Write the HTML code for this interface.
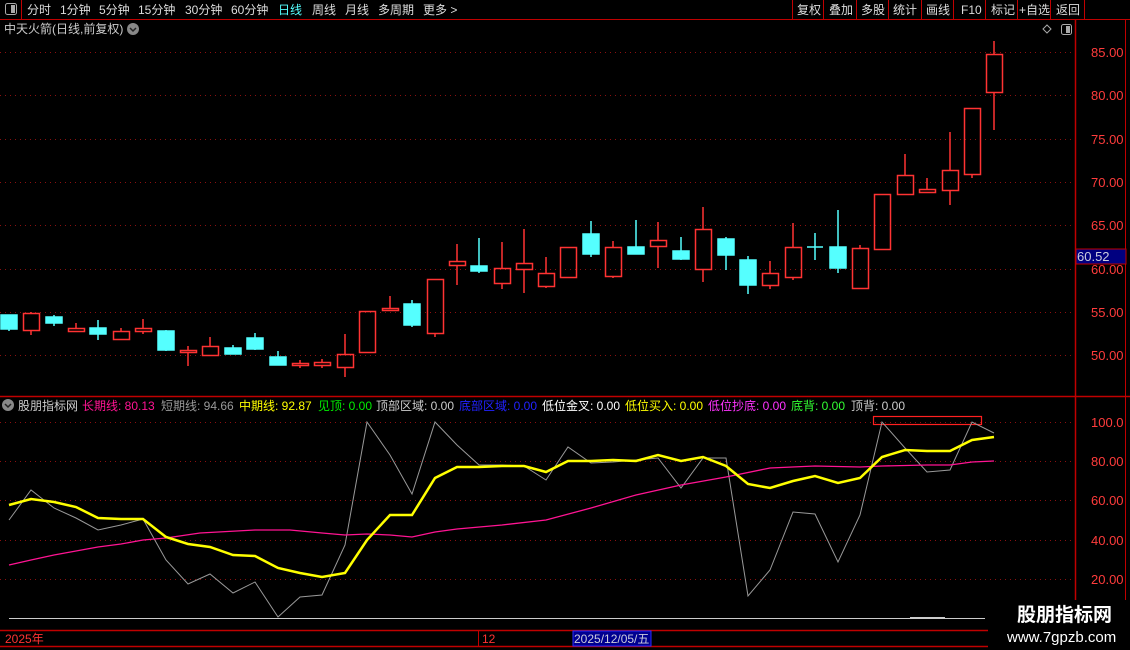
<!DOCTYPE html>
<html><head><meta charset="utf-8"><style>
html,body{margin:0;padding:0;background:#000;width:1130px;height:650px;overflow:hidden}
svg{display:block}
text{font-family:"Liberation Sans","Noto Sans CJK SC",sans-serif;font-size:12px}
</style></head><body>
<svg width="1130" height="650" viewBox="0 0 1130 650" xmlns="http://www.w3.org/2000/svg">
<rect width="1130" height="650" fill="#000"/>
<!-- top bar -->
<line x1="0" y1="19.5" x2="1130" y2="19.5" stroke="#c00000"/>
<line x1="21.5" y1="0" x2="21.5" y2="19" stroke="#c00000"/>
<rect x="5.5" y="3.5" width="11" height="11" rx="2" fill="none" stroke="#aaa"/>
<rect x="11" y="5" width="4" height="8" fill="#aaa"/>
<g fill="#ddd">
<text x="27" y="14">分时</text><text x="60" y="14">1分钟</text><text x="99" y="14">5分钟</text>
<text x="138" y="14">15分钟</text><text x="185" y="14">30分钟</text><text x="231" y="14">60分钟</text>
<text x="278" y="14" fill="#55ffff">日线</text><text x="312" y="14">周线</text><text x="345" y="14">月线</text>
<text x="378" y="14">多周期</text><text x="423" y="14">更多 &gt;</text>
<text x="797" y="14">复权</text><text x="829" y="14">叠加</text><text x="861" y="14">多股</text>
<text x="893" y="14">统计</text><text x="926" y="14">画线</text><text x="961" y="14">F10</text>
<text x="991" y="14">标记</text><text x="1019" y="14">+自选</text><text x="1056" y="14">返回</text>
</g>
<g stroke="#c00000">
<line x1="792.5" y1="0" x2="792.5" y2="19"/><line x1="823.5" y1="0" x2="823.5" y2="19"/>
<line x1="856.5" y1="0" x2="856.5" y2="19"/><line x1="888.5" y1="0" x2="888.5" y2="19"/>
<line x1="921.5" y1="0" x2="921.5" y2="19"/><line x1="953.5" y1="0" x2="953.5" y2="19"/>
<line x1="985.5" y1="0" x2="985.5" y2="19"/><line x1="1017.5" y1="0" x2="1017.5" y2="19"/>
<line x1="1050.5" y1="0" x2="1050.5" y2="19"/><line x1="1084.5" y1="0" x2="1084.5" y2="19"/>
</g>
<text x="4" y="33" fill="#ccc">中天火箭(日线,前复权)</text>
<circle cx="133" cy="29" r="6" fill="#888"/><path d="M130 28 l3 3 l3 -3" stroke="#222" stroke-width="1.5" fill="none"/>
<path d="M1047 25 l4 4 l-4 4 l-4 -4z" fill="none" stroke="#aaa"/>
<rect x="1061.5" y="24.5" width="10" height="10" rx="2" fill="none" stroke="#aaa"/><rect x="1066" y="26" width="4" height="7" fill="#aaa"/>
<!-- axes -->
<line x1="1075.5" y1="19" x2="1075.5" y2="630" stroke="#c00000" stroke-width="1.5"/>
<line x1="1125.5" y1="19" x2="1125.5" y2="630" stroke="#c00000"/>
<line x1="0" y1="396.5" x2="1130" y2="396.5" stroke="#c00000" stroke-width="1.5"/>
<g stroke="#8b1010" stroke-dasharray="1 4">
<line x1="0" y1="52.5" x2="1075" y2="52.5"/><line x1="0" y1="95.5" x2="1075" y2="95.5"/>
<line x1="0" y1="139.5" x2="1075" y2="139.5"/><line x1="0" y1="182.5" x2="1075" y2="182.5"/>
<line x1="0" y1="225.5" x2="1075" y2="225.5"/><line x1="0" y1="269.5" x2="1075" y2="269.5"/>
<line x1="0" y1="312.5" x2="1075" y2="312.5"/><line x1="0" y1="355.5" x2="1075" y2="355.5"/>
<line x1="0" y1="422.5" x2="1075" y2="422.5"/><line x1="0" y1="461.5" x2="1075" y2="461.5"/>
<line x1="0" y1="500.5" x2="1075" y2="500.5"/><line x1="0" y1="540.5" x2="1075" y2="540.5"/>
<line x1="0" y1="579.5" x2="1075" y2="579.5"/>
</g>
<g fill="#ff3c3c" font-size="13">
<text x="1091" y="57" style="font-size:13px">85.00</text><text x="1091" y="100" style="font-size:13px">80.00</text>
<text x="1091" y="144" style="font-size:13px">75.00</text><text x="1091" y="187" style="font-size:13px">70.00</text>
<text x="1091" y="230" style="font-size:13px">65.00</text><text x="1091" y="274" style="font-size:13px">60.00</text>
<text x="1091" y="317" style="font-size:13px">55.00</text><text x="1091" y="360" style="font-size:13px">50.00</text>
<text x="1091" y="427" style="font-size:13px">100.0</text><text x="1091" y="466" style="font-size:13px">80.00</text>
<text x="1091" y="505" style="font-size:13px">60.00</text><text x="1091" y="545" style="font-size:13px">40.00</text>
<text x="1091" y="584" style="font-size:13px">20.00</text>
</g>
<rect x="1076" y="249" width="50" height="15" fill="#000080" stroke="#c00000"/>
<text x="1077" y="261" fill="#ccd" style="font-size:13px">60.52</text>
<!-- candles -->
<g stroke-width="1.5" fill="none">
<g stroke="#55ffff" fill="#55ffff">
<line x1="9" y1="315" x2="9" y2="331"/><rect x="1" y="315" width="16" height="14"/>
<line x1="54" y1="315" x2="54" y2="326"/><rect x="46" y="317" width="16" height="6"/>
<line x1="98" y1="320" x2="98" y2="340"/><rect x="90" y="328" width="16" height="6"/>
<line x1="166" y1="330" x2="166" y2="351"/><rect x="158" y="331" width="16" height="19"/>
<line x1="233" y1="345" x2="233" y2="354"/><rect x="225" y="348" width="16" height="6"/>
<line x1="255" y1="333" x2="255" y2="350"/><rect x="247" y="338" width="16" height="11"/>
<line x1="278" y1="351" x2="278" y2="365"/><rect x="270" y="357" width="16" height="8"/>
<line x1="412" y1="300" x2="412" y2="327"/><rect x="404" y="304" width="16" height="21"/>
<line x1="479" y1="238" x2="479" y2="273"/><rect x="471" y="266" width="16" height="5"/>
<line x1="591" y1="221" x2="591" y2="257"/><rect x="583" y="234" width="16" height="20"/>
<line x1="636" y1="220" x2="636" y2="254"/><rect x="628" y="247" width="16" height="7"/>
<line x1="681" y1="237" x2="681" y2="260"/><rect x="673" y="251" width="16" height="8"/>
<line x1="726" y1="237" x2="726" y2="270"/><rect x="718" y="239" width="16" height="16"/>
<line x1="748" y1="256" x2="748" y2="294"/><rect x="740" y="260" width="16" height="25"/>
<line x1="815" y1="233" x2="815" y2="260"/><line x1="807" y1="247" x2="823" y2="247"/>
<line x1="838" y1="210" x2="838" y2="273"/><rect x="830" y="247" width="16" height="21"/>
</g>
<g stroke="#ff3333">
<path d="M31 312V313M31 330V335"/><rect x="23.5" y="313.5" width="16" height="17"/>
<path d="M76 323V328"/><rect x="68.5" y="328.5" width="16" height="3"/>
<path d="M121 328V331"/><rect x="113.5" y="331.5" width="16" height="8"/>
<path d="M143 319V328M143 331V334"/><rect x="135.5" y="328.5" width="16" height="3"/>
<path d="M188 346V350M188 352V366"/><rect x="180.5" y="350.5" width="16" height="2"/>
<path d="M210 337V346"/><rect x="202.5" y="346.5" width="16" height="9"/>
<path d="M300 360V363M300 365V368"/><rect x="292.5" y="363.5" width="16" height="2"/>
<path d="M322 359V362M322 365V368"/><rect x="314.5" y="362.5" width="16" height="3"/>
<path d="M345 334V354M345 367V377"/><rect x="337.5" y="354.5" width="16" height="13"/>
<rect x="359.5" y="311.5" width="16" height="41"/>
<path d="M390 296V308"/><rect x="382.5" y="308.5" width="16" height="2"/>
<path d="M435 333V337"/><rect x="427.5" y="279.5" width="16" height="54"/>
<path d="M457 244V261M457 265V285"/><rect x="449.5" y="261.5" width="16" height="4"/>
<path d="M502 242V268M502 283V289"/><rect x="494.5" y="268.5" width="16" height="15"/>
<path d="M524 229V263M524 269V293"/><rect x="516.5" y="263.5" width="16" height="6"/>
<path d="M546 257V273M546 286V288"/><rect x="538.5" y="273.5" width="16" height="13"/>
<rect x="560.5" y="247.5" width="16" height="30"/>
<path d="M613 241V247M613 276V278"/><rect x="605.5" y="247.5" width="16" height="29"/>
<path d="M658 222V240M658 246V268"/><rect x="650.5" y="240.5" width="16" height="6"/>
<path d="M703 207V229M703 269V282"/><rect x="695.5" y="229.5" width="16" height="40"/>
<path d="M770 261V273M770 285V289"/><rect x="762.5" y="273.5" width="16" height="12"/>
<path d="M793 223V247M793 277V280"/><rect x="785.5" y="247.5" width="16" height="30"/>
<path d="M860 245V248"/><rect x="852.5" y="248.5" width="16" height="40"/>
<rect x="874.5" y="194.5" width="16" height="55"/>
<path d="M905 154V175"/><rect x="897.5" y="175.5" width="16" height="19"/>
<path d="M927 178V189"/><rect x="919.5" y="189.5" width="16" height="3"/>
<path d="M950 132V170M950 190V205"/><rect x="942.5" y="170.5" width="16" height="20"/>
<path d="M972 174V178"/><rect x="964.5" y="108.5" width="16" height="66"/>
<path d="M994 41V54M994 92V130"/><rect x="986.5" y="54.5" width="16" height="38"/>
</g>
</g>
<!-- indicator legend -->
<circle cx="8" cy="405" r="6" fill="#888"/><path d="M5 404 l3 3 l3 -3" stroke="#222" stroke-width="1.5" fill="none"/>
<text y="410"><tspan x="18" fill="#ccc">股朋指标网</tspan><tspan x="82" fill="#ff1493">长期线: 80.13</tspan><tspan x="161" fill="#999">短期线: 94.66</tspan><tspan x="239" fill="#ffff00">中期线: 92.87</tspan><tspan x="318" fill="#00ee00">见顶: 0.00</tspan><tspan x="376" fill="#ccc">顶部区域: 0.00</tspan><tspan x="459" fill="#2222ff">底部区域: 0.00</tspan><tspan x="542" fill="#fff">低位金叉: 0.00</tspan><tspan x="625" fill="#ffff00">低位买入: 0.00</tspan><tspan x="708" fill="#ff33ff">低位抄底: 0.00</tspan><tspan x="791" fill="#33ff33">底背: 0.00</tspan><tspan x="851" fill="#ccc">顶背: 0.00</tspan></text>
<rect x="873.5" y="416.5" width="108" height="8" fill="none" stroke="#ff2020" stroke-width="1.2"/>
<!-- lines -->
<polyline fill="none" stroke="#999" stroke-width="1" points="9,520 31,490 54,508 76,518 98,530 121,525 143,519 166,560 188,584 210,574 233,593 255,582 278,617 300,597 322,595 345,545 367,422 390,455 412,494 435,422 457,445 479,465 502,465 524,466 546,480 568,447 591,463 613,462 636,460 658,458 681,488 703,458 726,458 748,596 770,570 793,512 815,514 838,562 860,515 882,422 905,448 927,472 950,470 972,422 994,433"/>
<polyline fill="none" stroke="#ff1493" stroke-width="1.3" points="9,565 31,560 54,555 76,551 98,547 121,544 143,540 166,538 200,533 255,530 290,530 322,533 345,535 367,534 390,535 412,537 435,532 457,529 502,525 546,520 591,508 636,495 681,485 726,477 770,468 815,466 860,467 882,466 927,465 950,465 972,462 994,461"/>
<polyline fill="none" stroke="#ffff00" stroke-width="2.5" points="9,505 31,499 54,502 76,507 98,518 121,519 143,519 166,537 188,544 210,547 233,555 255,556 278,568 300,573 322,577 345,573 367,540 390,515 412,515 435,478 457,467 479,467 502,466 524,466 546,472 568,461 591,461 613,460 636,461 658,455 681,461 703,457 726,466 748,484 770,488 793,481 815,476 838,483 860,478 882,457 905,450 927,451 950,451 972,440 994,437"/>
<line x1="9" y1="618.5" x2="985" y2="618.5" stroke="#ccc"/>
<path d="M910 618h35" stroke="#ccc" stroke-width="2"/>
<!-- date bar -->
<line x1="0" y1="630.5" x2="1130" y2="630.5" stroke="#c00000" stroke-width="1.5"/>
<line x1="0" y1="646.5" x2="1130" y2="646.5" stroke="#c00000" stroke-width="1.5"/>
<line x1="478.5" y1="631" x2="478.5" y2="646" stroke="#c00000"/>
<text x="5" y="643" fill="#ff3333">2025年</text>
<text x="482" y="643" fill="#ff3333">12</text>
<rect x="573" y="631" width="78" height="15" fill="#000090" stroke="#2a2aff"/>
<text x="574" y="643" fill="#ccd">2025/12/05/五</text>
<!-- watermark -->
<rect x="988" y="600" width="142" height="50" fill="#000"/>
<text x="1017" y="621" fill="#fff" style="font-size:19px;font-weight:bold">股朋指标网</text>
<text x="1007" y="642" fill="#fff" style="font-size:15px">www.7gpzb.com</text>
</svg>
</body></html>
